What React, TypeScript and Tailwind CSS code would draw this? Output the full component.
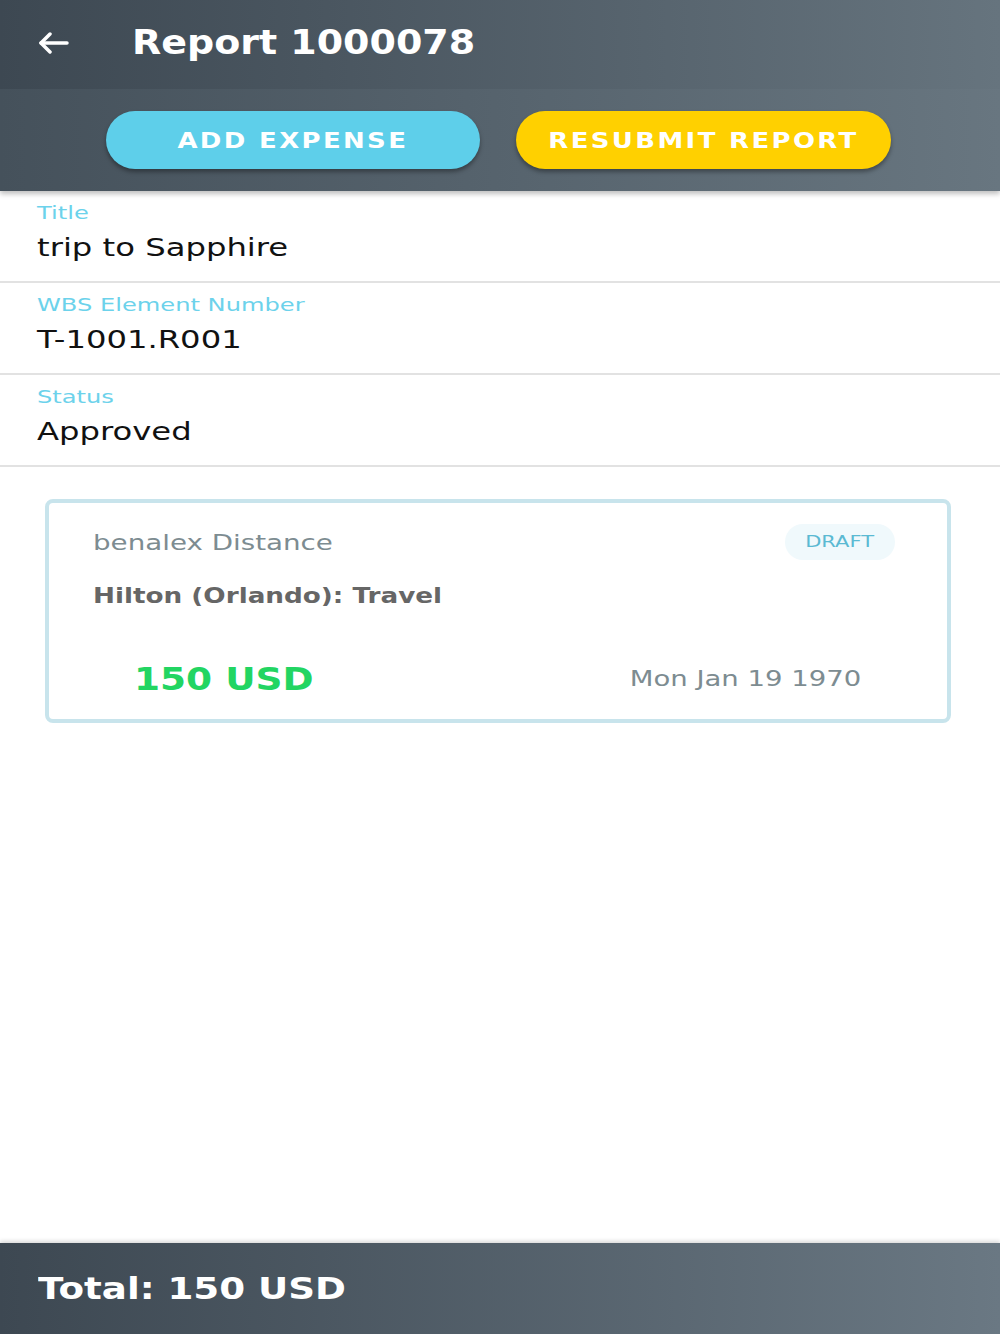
import React from "react";

const font = { fontFamily: '"DejaVu Sans", "Liberation Sans", sans-serif' };

function Field({ label, value }: { label: string; value: string }) {
  return (
    <div className="h-[92px] border-b-2 border-[#e2e2e2] px-[37px] pt-[12px]">
      <div className="text-[17px] leading-[20px] text-[#6cd2eb]">
        <span className="inline-block origin-left scale-x-[1.42]">{label}</span>
      </div>
      <div className="mt-[10px] text-[25px] leading-[30px] text-[#111]">
        <span className="inline-block origin-left scale-x-[1.29]">{value}</span>
      </div>
    </div>
  );
}

export default function App() {
  return (
    <div className="flex h-[1334px] w-[1000px] flex-col bg-white" style={font}>
      <div className="relative z-10 shadow-[0_3px_5px_rgba(0,0,0,0.25)]">
        <div className="flex h-[89px] items-center bg-gradient-to-r from-[#3d4852] to-[#66747e] pb-[4px]">
          <div className="flex w-[132px] items-center pl-[38px]">
            <svg width="31" height="22" viewBox="0 0 31 22" fill="none" stroke="white" strokeWidth="3.5" strokeLinecap="round" strokeLinejoin="round">
              <path d="M29 11H3" />
              <path d="M12 2L3 11L12 20" />
            </svg>
          </div>
          <div className="text-[33px] font-bold leading-none text-white">
            <span className="inline-block origin-left scale-x-[1.15]">Report 1000078</span>
          </div>
        </div>
        <div className="flex h-[102px] items-center gap-[36px] bg-gradient-to-r from-[#45515b] to-[#687680] pl-[106px]">
          <div className="flex h-[58px] w-[374px] items-center justify-center rounded-full bg-[#5ecfea] text-[22px] font-bold tracking-[2px] text-white shadow-[0_3px_4px_rgba(0,0,0,0.35)]">
            <span className="inline-block scale-x-[1.18]">ADD EXPENSE</span>
          </div>
          <div className="flex h-[58px] w-[375px] items-center justify-center rounded-full bg-[#ffd000] text-[22px] font-bold tracking-[2px] text-white shadow-[0_3px_4px_rgba(0,0,0,0.35)]">
            <span className="inline-block scale-x-[1.18]">RESUBMIT REPORT</span>
          </div>
        </div>
      </div>

      <Field label="Title" value="trip to Sapphire" />
      <Field label="WBS Element Number" value="T-1001.R001" />
      <Field label="Status" value="Approved" />

      <div className="flex-1 px-[45px] pt-[32px]">
        <div className="h-[224px] w-[906px] rounded-[8px] border-[4px] border-[#c8e4ec] bg-white pl-[44px] pr-[52px] pt-[21px]">
          <div className="flex items-center justify-between">
            <div className="text-[22px] text-[#7d8c91]">
              <span className="inline-block origin-left scale-x-[1.26]">benalex Distance</span>
            </div>
            <div className="flex h-[36px] w-[110px] items-center justify-center rounded-full bg-[#f0f9fc] text-[15px] text-[#5bbad3]">
              <span className="inline-block scale-x-[1.4]">DRAFT</span>
            </div>
          </div>
          <div className="mt-[21px] text-[21px] font-bold text-[#666]">
            <span className="inline-block origin-left scale-x-[1.25]">Hilton (Orlando): Travel</span>
          </div>
          <div className="mt-[42px] flex items-center justify-between pl-[41px] pr-[34px]">
            <div className="text-[32px] font-bold text-[#22d562]">
              <span className="inline-block origin-left scale-x-[1.17]">150 USD</span>
            </div>
            <div className="text-[22px] text-[#7d8c91]">
              <span className="inline-block origin-right scale-x-[1.25]">Mon Jan 19 1970</span>
            </div>
          </div>
        </div>
      </div>

      <div className="flex h-[91px] items-center bg-gradient-to-r from-[#3d4852] to-[#6a7883] pl-[38px] shadow-[0_-2px_4px_rgba(0,0,0,0.15)]">
        <div className="text-[31px] font-bold text-white">
          <span className="inline-block origin-left scale-x-[1.2]">Total: 150 USD</span>
        </div>
      </div>
    </div>
  );
}
